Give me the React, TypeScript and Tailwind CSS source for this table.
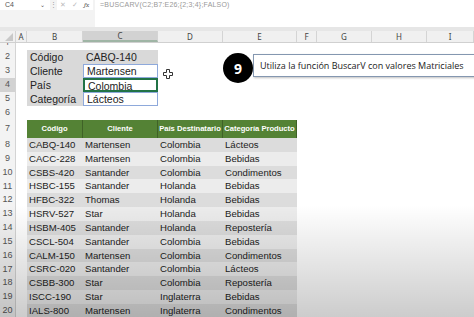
import React from "react";

const cols = [16, 11, 56, 75, 65, 74, 20, 55, 55, 47];
const colNames = ["", "A", "B", "C", "D", "E", "F", "G", "H", "I"];

const data: [string, string, string, string][] = [
  ["CABQ-140", "Martensen", "Colombia", "Lácteos"],
  ["CACC-228", "Martensen", "Colombia", "Bebidas"],
  ["CSBS-420", "Santander", "Colombia", "Condimentos"],
  ["HSBC-155", "Santander", "Holanda", "Bebidas"],
  ["HFBC-322", "Thomas", "Holanda", "Bebidas"],
  ["HSRV-527", "Star", "Holanda", "Bebidas"],
  ["HSBM-405", "Santander", "Holanda", "Repostería"],
  ["CSCL-504", "Santander", "Colombia", "Bebidas"],
  ["CALM-150", "Martensen", "Colombia", "Condimentos"],
  ["CSRC-020", "Santander", "Colombia", "Lácteos"],
  ["CSBB-300", "Star", "Colombia", "Repostería"],
  ["ISCC-190", "Star", "Inglaterra", "Bebidas"],
  ["IALS-800", "Martensen", "Inglaterra", "Condimentos"],
];

const lookup = [
  ["Código", "CABQ-140"],
  ["Cliente", "Martensen"],
  ["País", "Colombia"],
  ["Categoría", "Lácteos"],
];

const RowNum = ({ n, h, active }: { n: number | string; h: string; active?: boolean }) => (
  <div
    className={`w-[16px] shrink-0 flex items-center justify-center text-[9px] text-[#555] border-r border-[#d4d4d4] ${h} ${
      active ? "bg-[#d2d2d2] text-[#1e6b3c]" : "bg-[#f3f3f3]"
    }`}
  >
    {n}
  </div>
);

export default function App() {
  return (
    <div className="relative w-[474px] h-[317px] overflow-hidden bg-white" style={{ fontFamily: '"Liberation Sans", Arial, sans-serif' }}>
      {/* formula bar */}
      <div className="flex h-[27px] bg-[#f3f3f3]">
        <div className="flex w-[50px] h-[10px] bg-white items-center justify-between px-[5px] text-[7px] leading-[8px] text-[#555]">
          <span>C4</span>
          <span className="text-[6px]">⌄</span>
        </div>
        <div className="w-[7px] flex justify-center text-[7px] leading-[9px] text-[#999]">⋮</div>
        <div className="flex w-[36px] h-[10px] bg-white items-center gap-[6px] px-[3px] text-[7px] leading-[8px] text-[#bbb]">
          <span>✕</span>
          <span>✓</span>
          <span className="italic text-[#555] font-serif">fx</span>
        </div>
        <div className="flex-1 ml-[2px] bg-white pl-[5px] pt-[1px] text-[7px] leading-[8px] text-[#999] tracking-[0.2px]">
          =BUSCARV(C2;B7:E26;{"{"}2;3;4{"}"};FALSO)
        </div>
      </div>
      <div className="h-[4px] bg-[#e6e6e6]" />

      {/* column headers */}
      <div className="flex h-[12px] bg-[#f0f0f0] border-b border-[#d0d0d0]" style={{ fontFamily: '"Noto Sans", sans-serif' }}>
        {cols.map((w, i) => (
          <div
            key={i}
            style={{ width: w }}
            className={`shrink-0 flex items-center justify-center text-[8px] text-[#444] border-r border-[#d4d4d4] ${
              i === 3 ? "bg-[#d2d2d2] border-b-2 border-b-[#9fb5a5]" : ""
            }`}
          >
            {i === 0 ? (
              <svg width="10" height="10" viewBox="0 0 10 10" className="ml-[3px] mt-[1px]">
                <path d="M9 1 L9 9 L1 9 Z" fill="#c8c8c8" />
              </svg>
            ) : (
              colNames[i]
            )}
          </div>
        ))}
      </div>

      {/* row 1 (partly hidden) */}
      <div className="flex h-[7px]">
        <RowNum n="'" h="h-[7px]" />
      </div>

      {/* lookup block rows 2-5 */}
      {lookup.map(([label, value], r) => (
        <div key={label} className="flex h-[14px]">
          <RowNum n={r + 2} h="h-[14px]" active={r === 2} />
          <div className="w-[11px]" />
          <div className="w-[56px] bg-[#d9d9d9] pl-[3px] text-[10.5px] leading-[14px] text-[#222]">{label}</div>
          <div
            className={`w-[75px] pl-[3px] text-[10.5px] leading-[12px] text-[#222] ${
              r === 0
                ? "bg-[#d9d9d9] leading-[14px]"
                : r === 2
                ? "border-2 border-[#217346] leading-[10px]"
                : "border border-[#8ea9db]"
            }`}
          >
            {value}
          </div>
          {r === 1 && (
            <svg width="10" height="10" viewBox="0 0 10 10" className="ml-[5px] mt-[5px]">
              <path d="M3.5 0.5h3v3h3v3h-3v3h-3v-3h-3v-3h3z" fill="white" stroke="#333" strokeWidth="1" />
            </svg>
          )}
        </div>
      ))}

      {/* row 6 */}
      <div className="flex h-[14px]">
        <RowNum n={6} h="h-[14px]" />
      </div>

      {/* table header row 7 */}
      <div className="flex h-[18px]">
        <RowNum n={7} h="h-[18px]" />
        <div className="w-[11px]" />
        {["Código", "Cliente", "País Destinatario", "Categoría Producto"].map((t, i) => (
          <div
            key={t}
            style={{ width: [56, 75, 65, 74][i] }}
            className="shrink-0 flex items-center justify-center bg-[#548235] border-r border-[#3f6227] text-white font-bold text-[7.6px] whitespace-nowrap overflow-hidden"
          >
            {t}
          </div>
        ))}
      </div>

      {/* table body rows 8-20 */}
      {data.map((row, r) => (
        <div key={row[0]} className="flex h-[13.83px]">
          <RowNum n={r + 8} h="h-[13.83px]" />
          <div className="w-[11px]" />
          {row.map((cell, i) => (
            <div
              key={i}
              style={{ width: [56, 75, 65, 74][i] }}
              className={`shrink-0 pl-[2px] text-[9.6px] leading-[13.83px] text-[#222] whitespace-nowrap overflow-hidden ${
                r % 2 === 0 ? "bg-[#dcdcdc]" : "bg-[#ececec]"
              }`}
            >
              {cell}
            </div>
          ))}
        </div>
      ))}

      {/* callout */}
      <div className="absolute left-[253px] top-[54px] w-[230px] h-[23px] border border-[#8497b0] bg-white shadow-[1px_1px_2px_rgba(0,0,0,0.25)] flex items-center pl-[6px] text-[9px] text-[#222] whitespace-nowrap" style={{ fontFamily: '"Open Sans", sans-serif' }}>
        Utiliza la función BuscarV con valores Matriciales
      </div>
      <div className="absolute left-[223px] top-[53px] w-[30px] h-[30px] rounded-full bg-black flex items-center justify-center text-white font-bold text-[14px]" style={{ fontFamily: '"Open Sans", sans-serif' }}>
        9
      </div>

      {/* video shading */}
      <div className="pointer-events-none absolute left-0 right-0 top-[205px] bottom-0 bg-gradient-to-b from-transparent to-black/20" />
    </div>
  );
}
